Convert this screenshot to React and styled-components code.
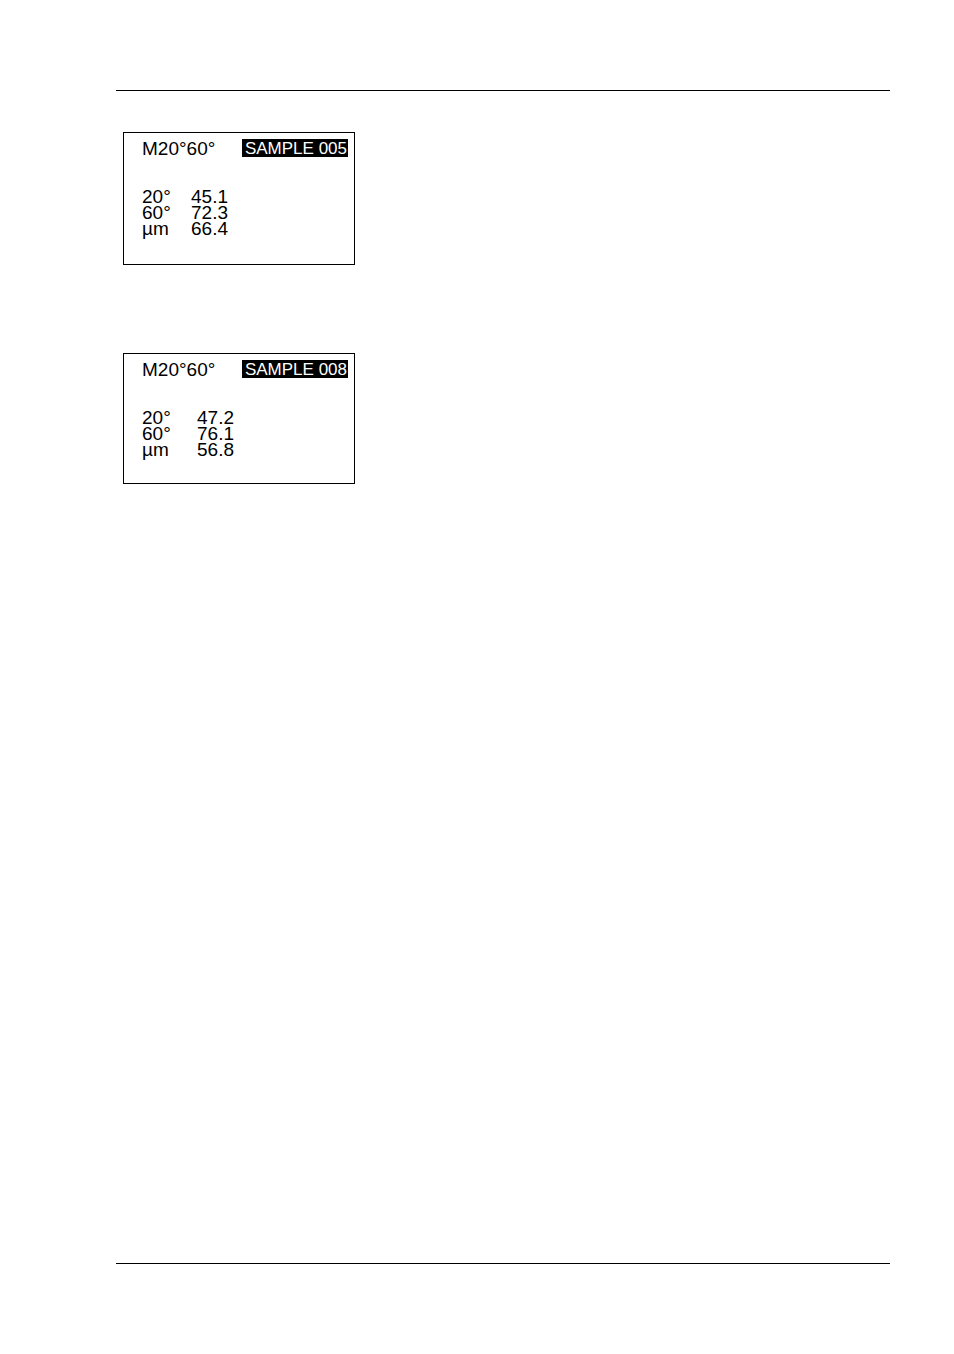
import React from "react"
import styled, { createGlobalStyle } from "styled-components"

const GlobalStyle = createGlobalStyle`
  body {
    margin: 0;
    background: #fff;
    color: #000;
    font-family: "Liberation Sans", Arial, sans-serif;
  }
`

const Page = styled.div`
  box-sizing: border-box;
  display: flex;
  flex-direction: column;
  min-height: 100vh;
  padding: 90px 64px 90px 116px;
`

const Content = styled.main`
  flex: 1;
  display: flex;
  flex-direction: column;
  align-items: flex-start;
  gap: 88px;
  padding: 41px 7px;
  border-top: 1px solid #000;
  border-bottom: 1px solid #000;
`

const Display = styled.section`
  box-sizing: border-box;
  width: 232px;
  max-width: 100%;
  padding: 6px 6px ${props => props.$bottom}px 18px;
  border: 1px solid #000;
`

const DisplayHeader = styled.header`
  display: flex;
  align-items: flex-start;
  justify-content: space-between;
  margin-bottom: 30px;
  line-height: 20px;
`

const Mode = styled.span`
  font-size: 19px;
`

const SampleName = styled.span`
  height: 18px;
  padding: 0 1px 0 3px;
  background: #000;
  color: #fff;
  font-size: 17px;
  white-space: nowrap;
`

const Readings = styled.table`
  border-collapse: collapse;
  font-size: 19px;
  line-height: 16px;
`

const Label = styled.th`
  min-width: ${props => props.$width}px;
  padding: 0;
  font-weight: normal;
  text-align: left;
`

const Value = styled.td`
  padding: 0;
`

const displays = [
  {
    sample: "SAMPLE 005",
    labelWidth: 49,
    bottom: 27,
    readings: [["20°", "45.1"], ["60°", "72.3"], ["µm", "66.4"]],
  },
  {
    sample: "SAMPLE 008",
    labelWidth: 55,
    bottom: 25,
    readings: [["20°", "47.2"], ["60°", "76.1"], ["µm", "56.8"]],
  },
]

const GlossDisplay = ({ sample, labelWidth, bottom, readings }) => (
  <Display $bottom={bottom}>
    <DisplayHeader>
      <Mode>M20°60°</Mode>
      <SampleName>{sample}</SampleName>
    </DisplayHeader>
    <Readings>
      <tbody>
        {readings.map(([label, value]) => (
          <tr key={label}>
            <Label scope="row" $width={labelWidth}>
              {label}
            </Label>
            <Value>{value}</Value>
          </tr>
        ))}
      </tbody>
    </Readings>
  </Display>
)

const App = () => (
  <>
    <GlobalStyle />
    <Page>
      <Content>
        {displays.map(display => (
          <GlossDisplay key={display.sample} {...display} />
        ))}
      </Content>
    </Page>
  </>
)

export default App
